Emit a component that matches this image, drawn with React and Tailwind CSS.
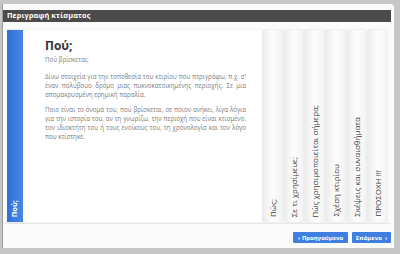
export default function App() {
  const tabs = [
    "Πώς;",
    "Σε τι χρησίμευε;",
    "Πώς χρησιμοποιείται σήμερα;",
    "Σχέση κτιρίου",
    "Σκέψεις και συναισθήματα",
    "ΠΡΟΣΟΧΗ !!!",
  ];
  return (
    <div className="w-[400px] h-[254px] bg-[#c6c6c6] pt-[4px] pl-[2px] overflow-hidden font-['Open_Sans',sans-serif]">
      <div className="w-[392px] h-[244px] bg-[#fbfbfb] rounded-tr-[4px] border-l border-[#9a9a9a] pt-[6px] flex flex-col">
        <div className="h-[12px] w-[388px] bg-[#4b4b4b] flex items-center pl-[4px]">
          <span className="text-white text-[7.4px] font-bold leading-none tracking-[0.1px]">Περιγραφή κτίσματος</span>
        </div>
        <div className="flex pl-[4px] pt-[8px] h-[192px] box-content">
          <div className="w-[16px] h-[192px] bg-gradient-to-r from-[#2f6fd6] to-[#4a88e6] flex flex-col justify-end items-center pb-[5px] shadow-[1px_0_2px_rgba(0,0,0,0.2)]">
            <span className="[writing-mode:vertical-rl] rotate-180 text-white font-bold text-[7.5px] leading-none">Πού;</span>
          </div>
          <div className="w-[239px] h-[192px] bg-white pl-[22px] pr-[16px] pt-[9px] shadow-[0_0_2px_rgba(0,0,0,0.08)]">
            <h1 className="text-[12px] font-bold text-[#333] leading-[14px]">Πού;</h1>
            <p className="text-[6.2px] text-[#7a7a7a] leading-[9px] mt-[2px]">Πού βρίσκεται;</p>
            <p className="text-[6.2px] text-[#7a7a7a] leading-[9px] mt-[8px] text-justify">
              Δίνω στοιχεία για την τοποθεσία του κτιρίου που περιγράφω, π.χ. σ' έναν πολύβουο δρόμο μιας πυκνοκατοικημένης περιοχής. Σε μια απομακρυσμένη ερημική παραλία.
            </p>
            <p className="text-[6.2px] text-[#7a7a7a] leading-[9px] mt-[6px] text-justify">
              Ποιο είναι το όνομά του, πού βρίσκεται, σε ποιον ανήκει, λίγα λόγια για την ιστορία του, αν τη γνωρίζω, την περιοχή που είναι κτισμένο, τον ιδιοκτήτη του ή τους ενοίκους του, τη χρονολογία και τον λόγο που κτίστηκε.
            </p>
          </div>
          <div className="flex gap-[2px] ml-[1px]">
            {tabs.map((t) => (
              <div
                key={t}
                className="w-[19px] h-[192px] bg-gradient-to-r from-[#ececec] via-[#fdfdfd] to-[#f3f3f3] shadow-[0_0_2px_rgba(0,0,0,0.15)] flex flex-col justify-end items-center pb-[5px]"
              >
                <span className="[writing-mode:vertical-rl] rotate-180 text-[#3a3a3a] text-[8px] leading-none whitespace-nowrap">{t}</span>
              </div>
            ))}
          </div>
        </div>
        <div className="h-px w-[386px] ml-[2px] mt-[1px] bg-[#e6e6e6]" />
        <div className="flex justify-end gap-[4px] pr-[3px] mt-[8px]">
          <button className="h-[11px] w-[55px] bg-[#3f7fe0] text-white text-[6px] font-bold leading-none flex items-center justify-center gap-[2px] rounded-[1px]">
            <span>‹</span>
            <span>Προηγούμενο</span>
          </button>
          <button className="h-[11px] w-[39px] bg-[#3f7fe0] text-white text-[6px] font-bold leading-none flex items-center justify-center gap-[3px] rounded-[1px]">
            <span>Επόμενο</span>
            <span>›</span>
          </button>
        </div>
      </div>
    </div>
  );
}
